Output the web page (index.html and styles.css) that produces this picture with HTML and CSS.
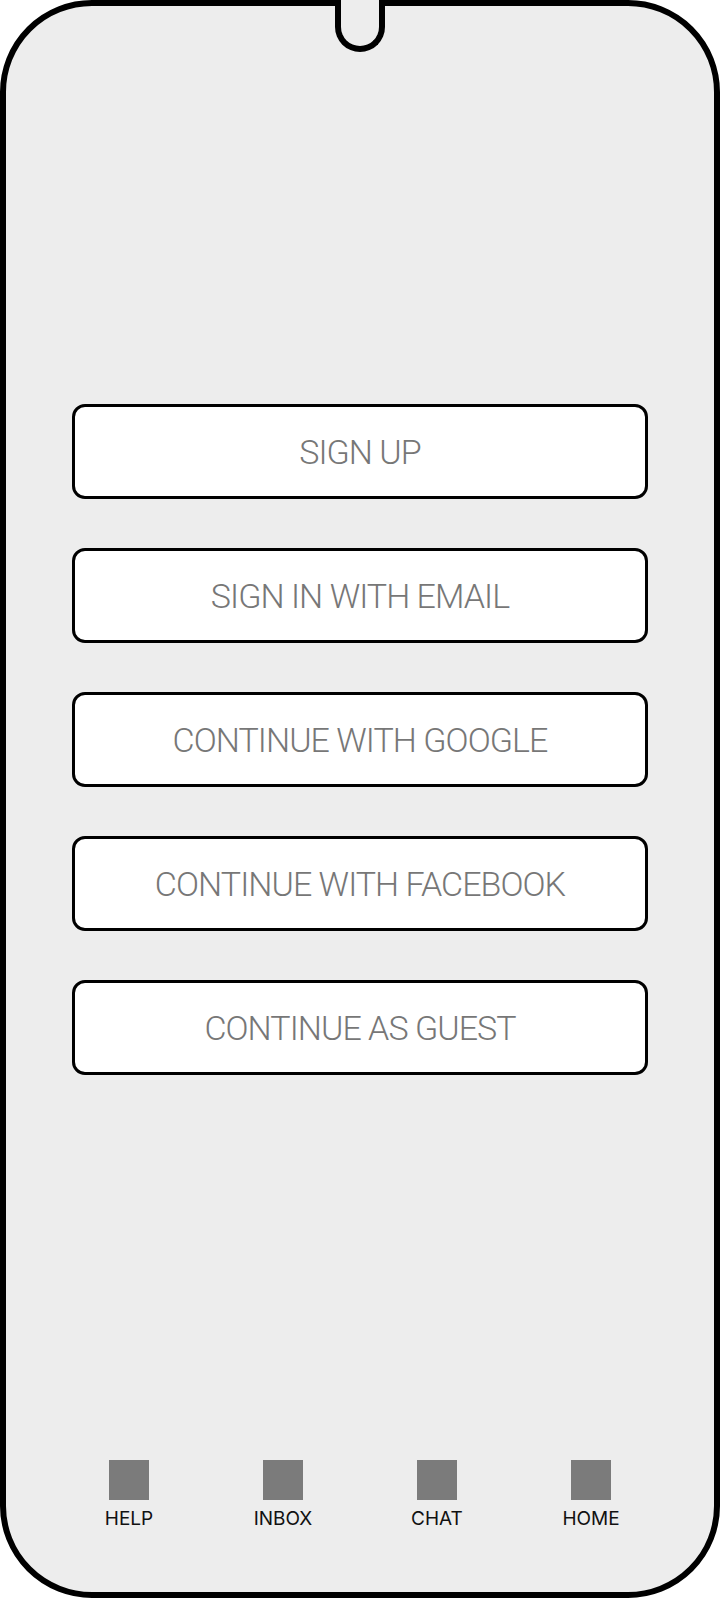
FILE: index.html
```html
<!DOCTYPE html>
<html lang="en">
<head>
<meta charset="utf-8">
<title>Welcome</title>
<link rel="stylesheet" href="styles.css">
</head>
<body>
<div class="phone">
  <div class="notch"></div>
  <div class="actions">
    <button class="btn">SIGN UP</button>
    <button class="btn">SIGN IN WITH EMAIL</button>
    <button class="btn">CONTINUE WITH GOOGLE</button>
    <button class="btn">CONTINUE WITH FACEBOOK</button>
    <button class="btn">CONTINUE AS GUEST</button>
  </div>
  <nav class="nav">
    <div class="nav-item"><span class="nav-icon"></span><span class="nav-label">HELP</span></div>
    <div class="nav-item"><span class="nav-icon"></span><span class="nav-label">INBOX</span></div>
    <div class="nav-item"><span class="nav-icon"></span><span class="nav-label">CHAT</span></div>
    <div class="nav-item"><span class="nav-icon"></span><span class="nav-label">HOME</span></div>
  </nav>
</div>
</body>
</html>
```
FILE: styles.css
```css
html, body {
  margin: 0;
  padding: 0;
  background: #ffffff;
}

.phone {
  position: relative;
  width: 720px;
  height: 1598px;
  box-sizing: border-box;
  border: 6px solid #000;
  border-radius: 92px;
  background: #ededed;
  display: flex;
  flex-direction: column;
  align-items: center;
}

.notch {
  position: absolute;
  top: -6px;
  left: calc(50% - 25px);
  width: 50px;
  height: 52px;
  box-sizing: border-box;
  border: 6px solid #000;
  border-top: none;
  border-radius: 0 0 25px 25px;
  background: #ededed;
}

.actions {
  margin-top: 398px;
  width: 576px;
  display: flex;
  flex-direction: column;
  gap: 49px;
}

.btn {
  height: 95px;
  box-sizing: border-box;
  border: 3px solid #000;
  border-radius: 13px;
  background: #fff;
  display: flex;
  align-items: center;
  justify-content: center;
  padding: 0;
  font-family: Roboto, "Liberation Sans", sans-serif;
  font-weight: 300;
  font-size: 34px;
  letter-spacing: -0.95px;
  color: #777777;
}

.nav {
  margin-top: 385px;
  display: grid;
  grid-template-columns: repeat(4, 154px);
}

.nav-item {
  display: flex;
  flex-direction: column;
  align-items: center;
  gap: 7px;
}

.nav-icon {
  width: 40px;
  height: 40px;
  background: #7b7b7b;
}

.nav-label {
  font-family: Inter, "Liberation Sans", sans-serif;
  font-size: 19px;
  line-height: 23px;
  color: #111;
}
```
